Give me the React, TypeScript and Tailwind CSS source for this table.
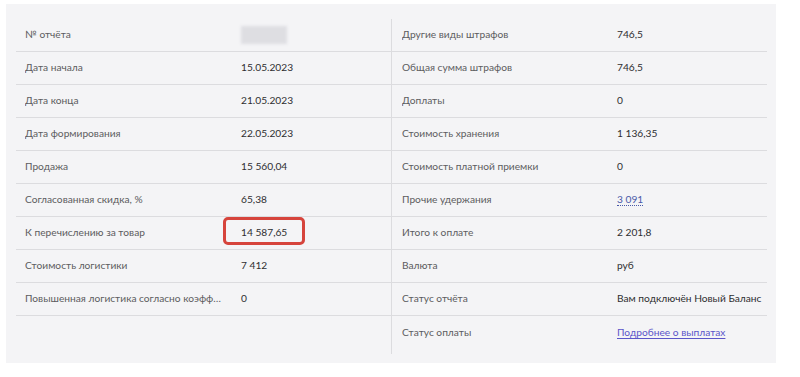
import type { ReactNode } from 'react';

type Row = { label: string; value: ReactNode };

const LEFT: Row[] = [
  { label: '№ отчёта', value: <span className="inline-block align-middle w-[46px] h-[18px] bg-[#dedee2] blur-[1.5px]" /> },
  { label: 'Дата начала', value: '15.05.2023' },
  { label: 'Дата конца', value: '21.05.2023' },
  { label: 'Дата формирования', value: '22.05.2023' },
  { label: 'Продажа', value: '15 560,04' },
  { label: 'Согласованная скидка, %', value: '65,38' },
  {
    label: 'К перечислению за товар',
    value: (
      <span className="relative">
        14 587,65
        <span className="absolute -left-[18px] -top-[9px] w-[82px] h-[28px] border-[3px] border-[#d6443c] rounded-[5px]" />
      </span>
    ),
  },
  { label: 'Стоимость логистики', value: '7 412' },
  { label: 'Повышенная логистика согласно коэффициенту', value: '0' },
];

const RIGHT: Row[] = [
  { label: 'Другие виды штрафов', value: '746,5' },
  { label: 'Общая сумма штрафов', value: '746,5' },
  { label: 'Доплаты', value: '0' },
  { label: 'Стоимость хранения', value: '1 136,35' },
  { label: 'Стоимость платной приемки', value: '0' },
  {
    label: 'Прочие удержания',
    value: <span className="text-[#4a5aa8] border-b border-dotted border-[#4a5aa8]">3 091</span>,
  },
  { label: 'Итого к оплате', value: '2 201,8' },
  { label: 'Валюта', value: 'руб' },
  { label: 'Статус отчёта', value: 'Вам подключён Новый Баланс' },
  {
    label: 'Статус оплаты',
    value: <span className="text-[#5b55c9] underline underline-offset-2">Подробнее о выплатах</span>,
  },
];

function TableRow({ row, last, left }: { row: Row; last?: boolean; left?: boolean }) {
  return (
    <div className={`flex items-center h-[33px] ${last ? '' : 'border-b border-[#dcdcdf]'} ${left ? 'pl-[9px]' : 'pl-[10px]'}`}>
      <div className={`${left ? 'w-[216px]' : 'w-[215px]'} shrink-0 pr-[20px] truncate text-[#5c5c60]`}>{row.label}</div>
      <div className="text-[#2e2e30] whitespace-nowrap">{row.value}</div>
    </div>
  );
}

export default function App() {
  return (
    <div className="w-[800px] h-[377px] bg-white pt-[4px] pl-[6px] font-['Lato','Liberation_Sans',sans-serif] text-[10.2px]">
      <div className="w-[770px] h-[359px] bg-[#f4f4f6] pt-[15px] pl-[10px] flex">
        <div className="w-[375px] self-start">
          {LEFT.map(r => (
            <TableRow key={r.label} row={r} left />
          ))}
        </div>
        <div className="w-px h-[335px] bg-[#dcdcdf]" />
        <div className="w-[375px] self-start">
          {RIGHT.map((r, i) => (
            <TableRow key={r.label} row={r} last={i === RIGHT.length - 1} />
          ))}
        </div>
      </div>
    </div>
  );
}
